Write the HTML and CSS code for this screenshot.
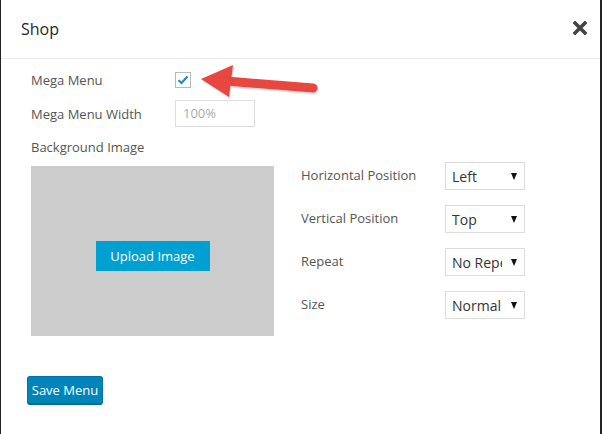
FILE: index.html
```html
<!DOCTYPE html>
<html>
<head>
<meta charset="utf-8">
<link rel="stylesheet" href="styles.css">
</head>
<body>
<div class="modal">
  <div class="header">
    <h1 class="title">Shop</h1>
    <span class="close" aria-label="Close">
      <svg width="14" height="14" viewBox="0 0 14 14"><path d="M2 2 L12 12 M12 2 L2 12" stroke="#444" stroke-width="3.6" stroke-linecap="square" fill="none"/></svg>
    </span>
  </div>
  <div class="content">
    <div class="row row-check">
      <label class="label">Mega Menu</label>
      <span class="checkbox">
        <svg width="12" height="10" viewBox="0 0 12 10"><path d="M1.5 5.2 L4.5 8 L10.5 1.5" stroke="#1e8cbe" stroke-width="2.2" fill="none"/></svg>
      </span>
    </div>
    <div class="row row-width">
      <label class="label">Mega Menu Width</label>
      <div class="input">100%</div>
    </div>
    <div class="row row-bg">
      <label class="label">Background Image</label>
    </div>
    <div class="image-area">
      <div class="image-box">
        <button class="upload">Upload Image</button>
      </div>
      <div class="options">
        <div class="opt"><span class="opt-label">Horizontal Position</span><div class="select"><span class="sel-text">Left</span><span class="caret"></span></div></div>
        <div class="opt"><span class="opt-label">Vertical Position</span><div class="select"><span class="sel-text">Top</span><span class="caret"></span></div></div>
        <div class="opt"><span class="opt-label">Repeat</span><div class="select"><span class="sel-text">No Repeat</span><span class="caret"></span></div></div>
        <div class="opt"><span class="opt-label">Size</span><div class="select"><span class="sel-text">Normal</span><span class="caret"></span></div></div>
      </div>
    </div>
    <button class="save">Save Menu</button>
  </div>
  <svg class="arrow" width="602" height="120" viewBox="0 50 602 120">
    <g fill="#000" opacity="0.12" transform="translate(1,2)">
      <path d="M229 81 L313 88" stroke="#000" stroke-width="9" stroke-linecap="round"/>
      <polygon points="201,79 233,65 229,97"/>
    </g>
    <path d="M226 81 L313 88" stroke="#e8473f" stroke-width="9" stroke-linecap="round" fill="none"/>
    <polygon points="201,79 233,65 229,97" fill="#e8473f"/>
  </svg>
</div>
</body>
</html>
```
FILE: styles.css
```css
* { box-sizing: border-box; }
html, body { margin: 0; padding: 0; }
body {
  background: #222;
  width: 602px;
  height: 434px;
  overflow: hidden;
  font-family: "Open Sans", "Noto Sans", sans-serif;
}
.modal {
  position: relative;
  margin: 0 2px 0 1px;
  height: 434px;
  background: #fff;
}
.header {
  height: 59px;
  border-bottom: 1px solid #ececec;
  display: flex;
  align-items: center;
  justify-content: space-between;
  padding: 0 13px 0 20px;
}
.title {
  margin: 0;
  font-size: 16px;
  font-weight: normal;
  color: #23282d;
}
.close { display: flex; width: 14px; height: 14px; margin-bottom: 2px; }
.content {
  padding: 13px 30px 0 30px;
  color: #555;
  font-size: 13px;
}
.row { display: flex; align-items: center; }
.label { width: 144px; color: #555; }
.row-check { height: 16px; }
.checkbox {
  width: 16px; height: 16px;
  margin-top: -1px;
  border: 1px solid #b4b9be;
  display: flex; align-items: center; justify-content: center;
  background: #fff;
}
.row-width { margin-top: 12px; height: 27px; }
.input {
  width: 80px; height: 27px;
  border: 1px solid #ddd;
  color: #aaa;
  padding: 0 7px;
  line-height: 25px;
  font-size: 13px;
}
.row-bg { margin-top: 12px; height: 16px; }
.image-area {
  display: flex;
  margin-top: 7px;
  gap: 27px;
}
.image-box {
  width: 243px; height: 170px;
  margin-top: 4px;
  background: #ccc;
  display: flex; align-items: center; justify-content: center;
  padding-top: 10px;
}
.upload {
  width: 114px; height: 30px;
  border: 0;
  background: #00a0d2;
  color: #fff;
  font-family: "Open Sans", "Noto Sans", sans-serif;
  font-size: 13px;
  padding: 0;
}
.options { display: flex; flex-direction: column; gap: 15px; }
.opt { display: flex; align-items: center; height: 28px; }
.opt-label { width: 144px; color: #555; font-size: 13px; padding-bottom: 2px; }
.select {
  width: 80px; height: 28px;
  border: 1px solid #ddd;
  display: flex; align-items: center;
  padding: 0 7px 0 6px;
  color: #333;
  font-size: 14px;
}
.sel-text { width: 50px; overflow: hidden; white-space: nowrap; }
.caret {
  margin-left: auto;
  width: 0; height: 0;
  border-left: 3.5px solid transparent;
  border-right: 3.5px solid transparent;
  border-top: 7px solid #111;
}
.save {
  margin-top: 40px;
  margin-left: -4px;
  width: 76px; height: 29px;
  background: #0085ba;
  border: 1px solid #0073aa;
  border-bottom: 2px solid #006799;
  border-radius: 3px;
  color: #fff;
  font-family: "Open Sans", "Noto Sans", sans-serif;
  font-size: 13px;
  padding: 0;
}
.arrow { position: absolute; left: -1px; top: 50px; pointer-events: none; }
```
